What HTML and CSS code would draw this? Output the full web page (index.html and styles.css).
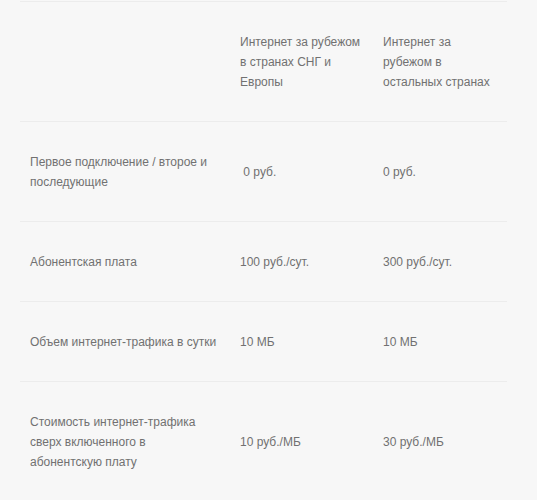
FILE: index.html
```html
<!DOCTYPE html>
<html lang="ru">
<head>
  <meta charset="UTF-8" />
  <title>Интернет за рубежом</title>
  <link rel="stylesheet" href="styles.css">
</head>
<body>
  <table class="tariffs">
    <colgroup>
      <col class="col-name">
      <col class="col-cis">
      <col class="col-other">
    </colgroup>
    <tr>
      <td></td>
      <td>Интернет за рубежом в странах СНГ и Европы</td>
      <td>Интернет за рубежом в остальных странах</td>
    </tr>
    <tr>
      <td>Первое подключение / второе и последующие</td>
      <td>&nbsp;0 руб.</td>
      <td>0 руб.</td>
    </tr>
    <tr>
      <td>Абонентская плата</td>
      <td>100 руб./сут.</td>
      <td>300 руб./сут.</td>
    </tr>
    <tr>
      <td>Объем интернет-трафика в сутки</td>
      <td>10 МБ</td>
      <td>10 МБ</td>
    </tr>
    <tr>
      <td>Стоимость интернет-трафика сверх включенного в абонентскую плату</td>
      <td>10 руб./МБ</td>
      <td>30 руб./МБ</td>
    </tr>
  </table>
</body>
</html>
```

FILE: styles.css
```css
body {
  margin: 0;
  padding: 1px 0 0 20px;
  background: #f7f7f7;
  font-family: "Liberation Sans", Arial, sans-serif;
  font-size: 12px;
  color: #717171;
}
/* Tariff comparison table */
.tariffs {
  width: 487px;
  border-collapse: collapse;
  table-layout: fixed;
}
.col-name {
  width: 210px;
}
.col-cis {
  width: 143px;
}
.tariffs td {
  padding: 30px 10px 29px;
  line-height: 20px;
  vertical-align: middle;
  border-top: 1px solid #ececec;
}
```
